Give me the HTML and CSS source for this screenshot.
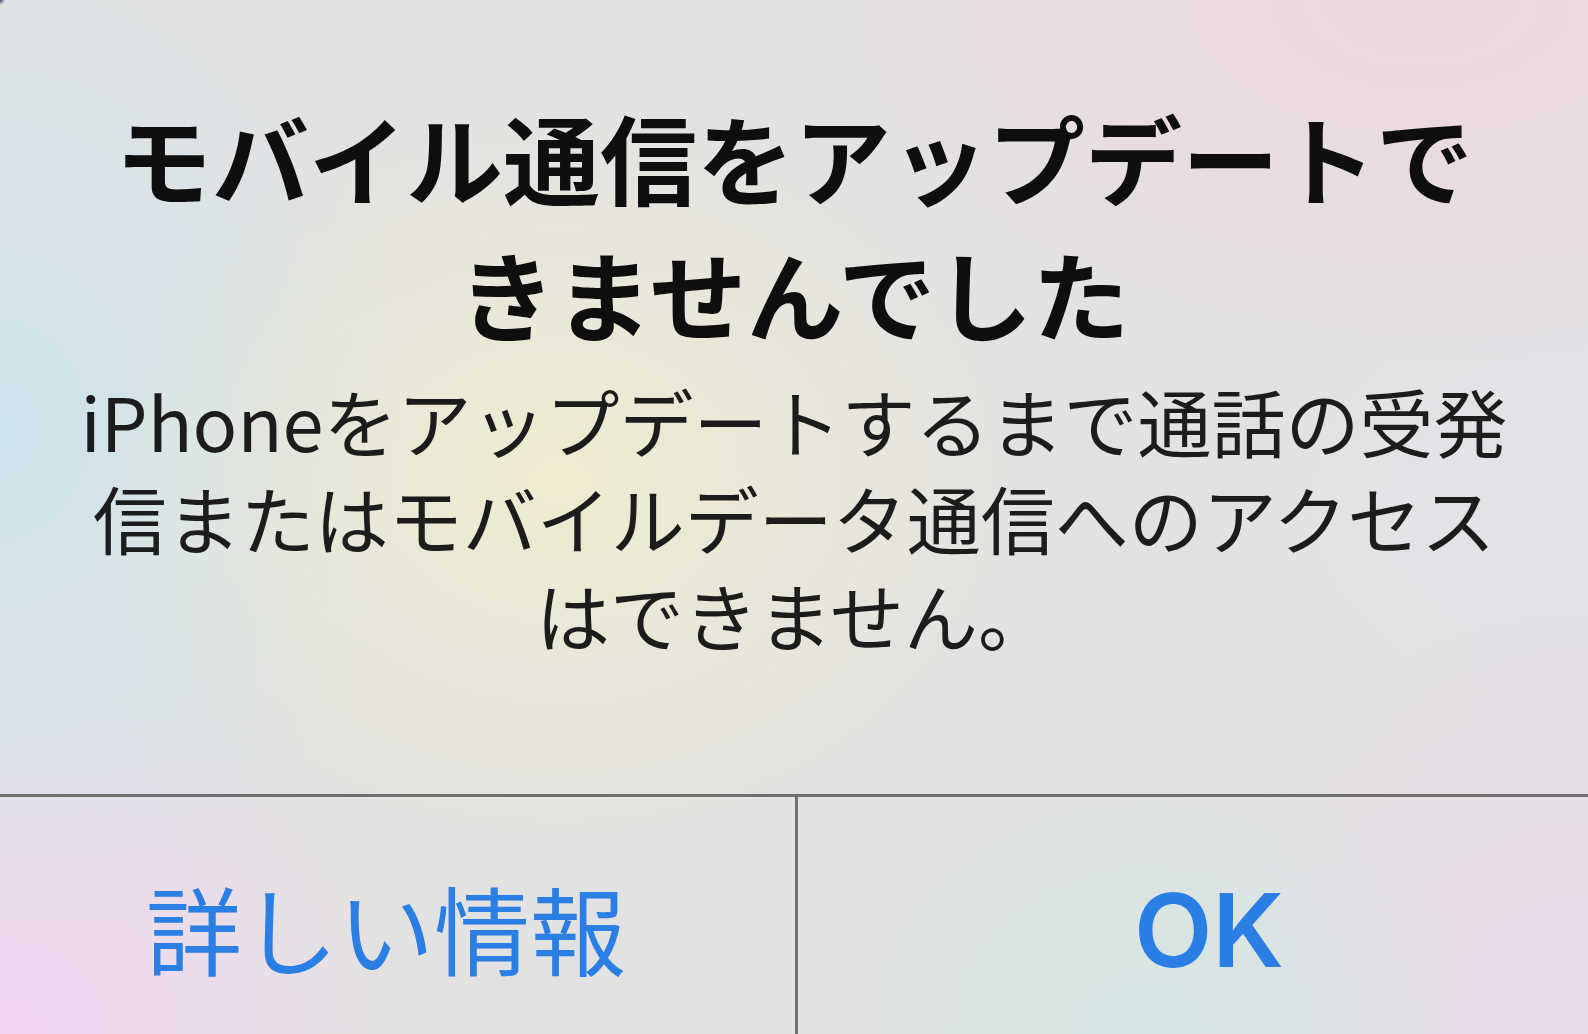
FILE: index.html
```html
<!DOCTYPE html>
<html lang="ja">
<head>
<meta charset="utf-8">
<title>モバイル通信をアップデートできませんでした</title>
<link rel="stylesheet" href="styles.css">
</head>
<body>
<div class="alert">
  <div class="alert-content">
    <h1 class="alert-title">モバイル通信をアップデートで<br>きませんでした</h1>
    <p class="alert-message">iPhoneをアップデートするまで通話の受発<br>信またはモバイルデータ通信へのアクセス<br>はできません。</p>
  </div>
  <div class="alert-actions">
    <div class="alert-button alert-button-secondary">詳しい情報</div>
    <div class="alert-button alert-button-primary">OK</div>
  </div>
</div>
</body>
</html>
```

FILE: styles.css
```css
html, body {
  margin: 0;
  padding: 0;
}

body {
  width: 1588px;
  height: 1034px;
  overflow: hidden;
  font-family: "Noto Sans CJK JP", "Noto Sans", sans-serif;
}

.alert {
  width: 1588px;
  height: 1034px;
  display: flex;
  flex-direction: column;
  background:
    radial-gradient(circle at 0 0, rgba(40, 50, 80, 0.9) 0, rgba(40, 50, 80, 0.6) 2px, rgba(40, 50, 80, 0) 5px),
    radial-gradient(ellipse 480px 380px at 560px 480px, rgba(242, 238, 204, 0.8), rgba(242, 238, 204, 0)),
    radial-gradient(ellipse 420px 520px at 0px 430px, rgba(203, 228, 238, 0.9), rgba(203, 228, 238, 0)),
    radial-gradient(ellipse 620px 360px at 1420px 0px, rgba(240, 212, 220, 0.85), rgba(240, 212, 220, 0)),
    radial-gradient(ellipse 400px 360px at 0px 1034px, rgba(246, 212, 246, 0.9), rgba(246, 212, 246, 0)),
    radial-gradient(ellipse 340px 280px at 1150px 1034px, rgba(206, 232, 228, 0.75), rgba(206, 232, 228, 0)),
    radial-gradient(ellipse 420px 420px at 1588px 1034px, rgba(234, 216, 234, 0.85), rgba(234, 216, 234, 0)),
    radial-gradient(ellipse 400px 300px at 1588px 500px, rgba(228, 226, 234, 0.8), rgba(228, 226, 234, 0)),
    #e3e2e2;
}

.alert-content {
  height: 794px;
  box-sizing: border-box;
  padding-top: 88px;
  text-align: center;
  white-space: nowrap;
}

.alert-title {
  margin: 0;
  font-size: 97px;
  line-height: 136px;
  font-weight: 700;
  color: #0e0e0e;
}

.alert-message {
  margin: 11px 0 0;
  font-size: 74px;
  line-height: 97px;
  font-weight: 400;
  color: #1c1c1c;
}

.alert-actions {
  flex: 1;
  display: flex;
  border-top: 3px solid #6e6e6e;
}

.alert-button {
  box-sizing: border-box;
  padding-top: 82px;
  text-align: center;
  color: #2a7ee4;
  white-space: nowrap;
}

.alert-button-secondary {
  flex: 0 0 798px;
  border-right: 3px solid #707070;
  padding-right: 23px;
  font-size: 96px;
  line-height: 96px;
  font-weight: 400;
}

.alert-button-primary {
  flex: 1 1 auto;
  padding-left: 32px;
  font-family: "Inter", "Noto Sans", sans-serif;
  font-size: 102px;
  line-height: 102px;
  font-weight: 600;
}
```
